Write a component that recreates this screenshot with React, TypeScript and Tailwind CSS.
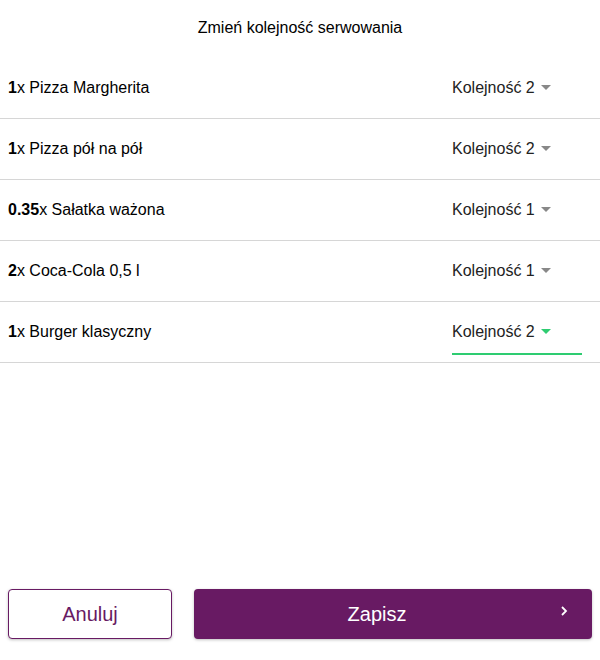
const items = [
  { qty: '1', name: 'Pizza Margherita', order: 2 },
  { qty: '1', name: 'Pizza pół na pół', order: 2 },
  { qty: '0.35', name: 'Sałatka ważona', order: 1 },
  { qty: '2', name: 'Coca-Cola 0,5 l', order: 1 },
  { qty: '1', name: 'Burger klasyczny', order: 2, active: true },
];

function OrderSelect({ value, active }: { value: number; active?: boolean }) {
  return (
    <div
      className={`flex h-[45px] w-[130px] items-center border-b-2 pt-[1px] ${
        active ? 'border-[#2ecc71]' : 'border-transparent'
      }`}
    >
      <span className="text-[16px] text-[#222]">Kolejność {value}</span>
      <span
        className={`ml-[6px] h-0 w-0 border-x-[5px] border-t-[5px] border-x-transparent ${
          active ? 'border-t-[#2ecc71]' : 'border-t-[#888]'
        }`}
      />
    </div>
  );
}

export default function App() {
  return (
    <div className="flex h-[660px] w-[600px] flex-col bg-white font-['Liberation_Sans',Arial,sans-serif] text-black">
      <h1 className="pt-[18px] text-center text-[16px] leading-[20px]">Zmień kolejność serwowania</h1>
      <ul className="mt-[20px]">
        {items.map((item) => (
          <li
            key={item.name}
            className="flex h-[61px] items-center justify-between border-b border-[#d6d6d6] pl-[8px] pr-[18px]"
          >
            <span className="text-[16px]">
              <b>{item.qty}</b>x {item.name}
            </span>
            <OrderSelect value={item.order} active={item.active} />
          </li>
        ))}
      </ul>
      <div className="mt-auto flex gap-[22px] px-[8px] pb-[21px]">
        <button className="h-[50px] w-[164px] rounded-[4px] border border-[#681a63] bg-white text-[20px] text-[#681a63] shadow-[0_1px_3px_rgba(0,0,0,0.25)]">
          Anuluj
        </button>
        <button className="relative flex h-[50px] flex-1 items-center justify-center rounded-[4px] bg-[#681a63] pr-[32px] text-[20px] text-white shadow-[0_1px_3px_rgba(0,0,0,0.25)]">
          Zapisz
          <svg
            viewBox="0 0 8 10"
            className="absolute right-[24px] top-[17px] h-[10px] w-[8px]"
            fill="none"
            stroke="currentColor"
            strokeWidth="1.8"
          >
            <path d="M2 1l4 4-4 4" />
          </svg>
        </button>
      </div>
    </div>
  );
}
